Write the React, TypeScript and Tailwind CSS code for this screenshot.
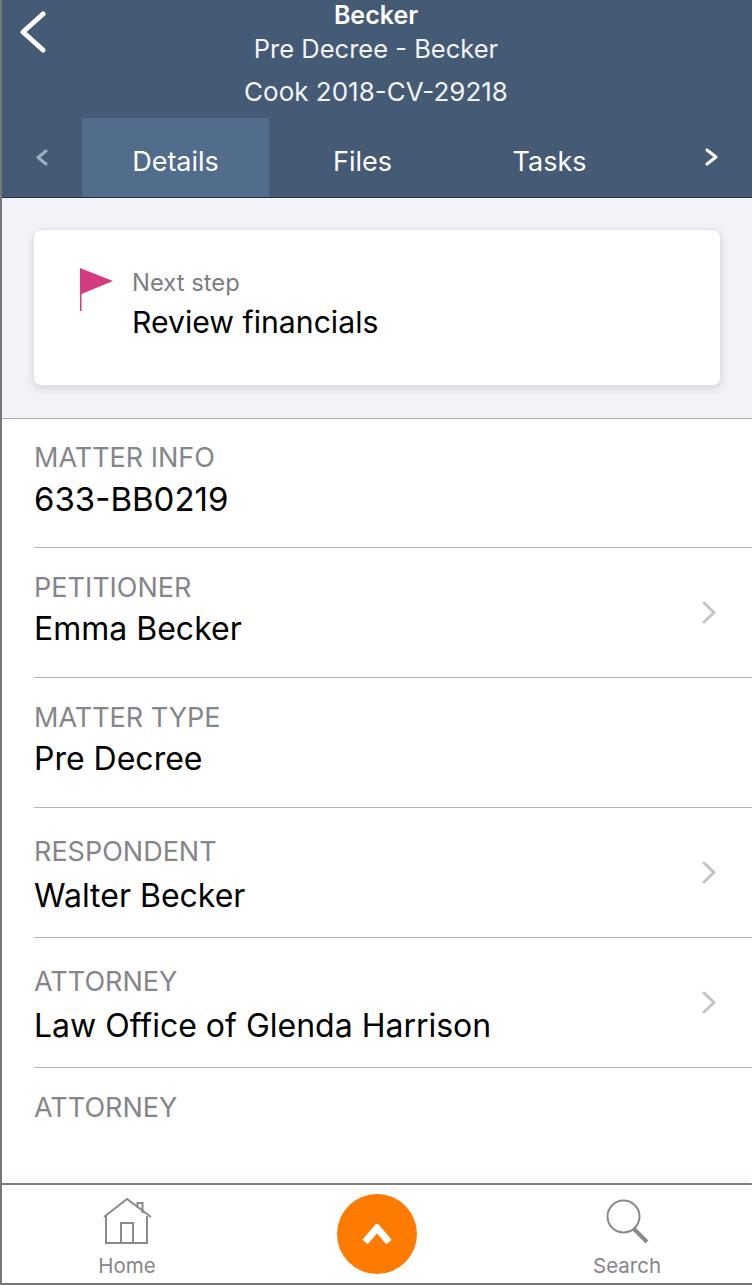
import type { ReactNode } from 'react'

const rows = [
  { label: 'MATTER INFO', value: '633-BB0219', box: 'h-[129px] pt-6', gap: 'mt-[6px] text-[33px]' },
  { label: 'PETITIONER', value: 'Emma Becker', link: true, box: 'h-[130px] pt-[25px]', gap: 'mt-[6px] text-[32px]' },
  { label: 'MATTER TYPE', value: 'Pre Decree', box: 'h-[130px] pt-[25px]', gap: 'mt-[6px] text-[32px]' },
  { label: 'RESPONDENT', value: 'Walter Becker', link: true, box: 'h-[130px] pt-[29px]', gap: 'mt-[9px] text-[32px]' },
  { label: 'ATTORNEY', value: 'Law Office of Glenda Harrison', link: true, box: 'h-[130px] pt-[29px]', gap: 'mt-[9px] text-[32px]' },
]

function Chevron({ dir, className, width, height, stroke }: { dir: 'left' | 'right'; className: string; width: number; height: number; stroke: number }) {
  const s = stroke / 2 + 0.5
  const d =
    dir === 'left'
      ? `M${width - s} ${s} L${s} ${height / 2} L${width - s} ${height - s}`
      : `M${s} ${s} L${width - s} ${height / 2} L${s} ${height - s}`
  return (
    <svg width={width} height={height} viewBox={`0 0 ${width} ${height}`} fill="none" stroke="currentColor" strokeWidth={stroke} strokeLinecap="round" strokeLinejoin="round" className={className}>
      <path d={d} />
    </svg>
  )
}

function InfoRow({ label, value, link, box, gap }: { label: string; value: string; link?: boolean; box: string; gap: string }) {
  return (
    <div className={`relative ml-8 shrink-0 border-b border-[#b4b4b8] pr-8 ${box}`}>
      <div className="text-[27px] leading-[30px] text-[#85858b]">{label}</div>
      <div className={`leading-[40px] text-black ${gap}`}>{value}</div>
      {link && <Chevron dir="right" width={14} height={23} stroke={3} className="absolute right-[36px] top-[53px] text-[#c3c3c8]" />}
    </div>
  )
}

function Tab({ children, active }: { children: ReactNode; active?: boolean }) {
  return (
    <div className={`w-[187px] flex items-center justify-center pt-[10px] text-[27px] ${active ? 'bg-[#526d8b]' : ''}`}>
      {children}
    </div>
  )
}

export default function App() {
  return (
    <div className="w-[752px] h-[1285px] flex flex-col overflow-hidden bg-white border-l-2 border-b-2 border-[#77777a] font-['Inter',sans-serif]">
      {/* Header */}
      <header className="relative h-[198px] shrink-0 bg-[#455a75] border-b border-[#1f3350] text-white text-center">
        <Chevron dir="left" width={26} height={42} stroke={5} className="absolute left-[18px] top-[11px]" />
        <div className="h-[118px] pt-[1px] pr-[2px]">
          <div className="text-[25px] leading-[28px] font-semibold">Becker</div>
          <div className="text-[25.5px] leading-[30px] mt-[5px] text-[#f2f4f7]">Pre Decree - Becker</div>
          <div className="text-[26px] leading-[30px] mt-[13px] text-[#f2f4f7]">Cook 2018-CV-29218</div>
        </div>
        <div className="flex h-[79px] items-stretch">
          <div className="w-[80px] flex items-center justify-center pb-[1px]">
            <Chevron dir="left" width={12} height={17} stroke={3} className="text-[#9fb0c2]" />
          </div>
          <Tab active>Details</Tab>
          <Tab>Files</Tab>
          <Tab>Tasks</Tab>
          <div className="flex-1 flex items-center justify-center pb-[1px] pl-[28px]">
            <Chevron dir="right" width={13} height={18} stroke={3} className="" />
          </div>
        </div>
      </header>

      {/* Next step card */}
      <section className="h-[221px] shrink-0 bg-[#f2f2f8] border-b border-[#a9a9ae] pt-[31px] px-[31px]">
        <div className="h-[157px] rounded-lg bg-white border border-[#e2e2e7] shadow-[0_3px_8px_rgba(0,0,0,0.12)] flex items-start pl-[46px] pt-[38px]">
          <svg width="33" height="43" viewBox="0 0 33 43" className="shrink-0">
            <path d="M0 0 L33 13 L1.5 26 L1.5 43 L0 43 Z" fill="#d53c7f" />
          </svg>
          <div className="ml-[19px]">
            <div className="text-[23.8px] leading-[30px] text-[#7d7d83]">Next step</div>
            <div className="text-[30.2px] leading-[40px] mt-[4px] text-black">Review financials</div>
          </div>
        </div>
      </section>

      {/* Detail rows */}
      <main className="flex-1 min-h-0 flex flex-col overflow-hidden">
        {rows.map((row) => (
          <InfoRow key={row.value} {...row} />
        ))}
        <div className="ml-8 pt-[25px] text-[27px] leading-[30px] text-[#85858b]">ATTORNEY</div>
      </main>

      {/* Bottom nav */}
      <nav className="relative h-[100px] shrink-0 border-t-2 border-[#7f7f82] bg-white flex justify-between text-[#85858b] text-[20.5px] shadow-[0_-6px_10px_rgba(0,0,0,0.03)]">
        <div className="w-[250px] flex flex-col items-center pt-[13px]">
          <svg width="50" height="46" viewBox="0 0 50 46" fill="none" stroke="#8a8a8d" strokeWidth="2">
            <path d="M2 19 L25 1 L49 19" />
            <path d="M4 18 V45 H45 V18" />
            <path d="M19 45 V25 H31 V45" />
            <path d="M35.5 10 V5 H40.5 V15" />
          </svg>
          <span className="leading-[24px] mt-[10px]">Home</span>
        </div>
        <button className="absolute left-[335px] top-[9px] w-[80px] h-[80px] rounded-full bg-[#ff7b00] flex items-center justify-center">
          <svg width="30" height="20" viewBox="0 0 30 20" fill="none" stroke="white" strokeWidth="7">
            <path d="M3 18 L15 4 L27 18" />
          </svg>
        </button>
        <div className="w-[250px] flex flex-col items-center pt-[13px]">
          <svg width="50" height="46" viewBox="0 0 50 46" fill="none" stroke="#8a8a8d">
            <circle cx="21.5" cy="18.5" r="16" strokeWidth="2" />
            <path d="M32 31 L45 44" strokeWidth="4" />
          </svg>
          <span className="leading-[24px] mt-[10px]">Search</span>
        </div>
      </nav>
    </div>
  )
}
